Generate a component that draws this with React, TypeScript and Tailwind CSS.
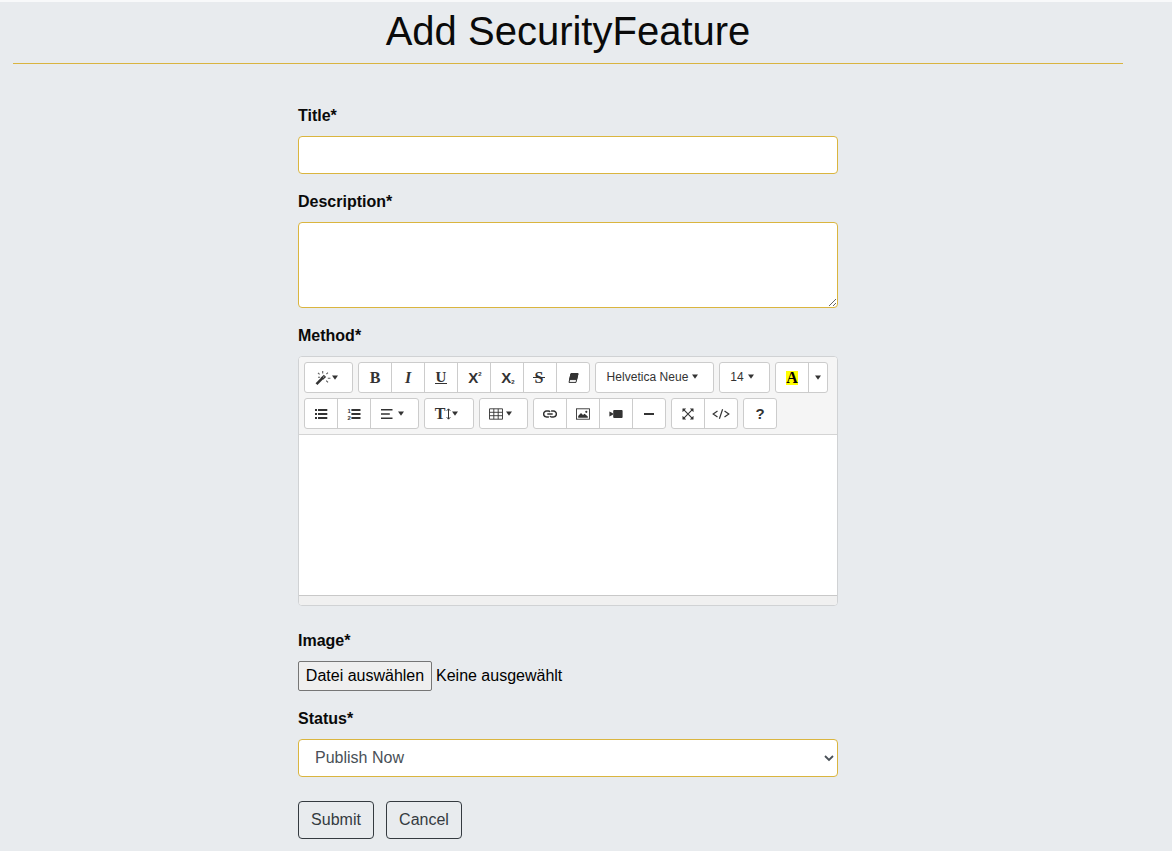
import type { ReactNode } from "react";

const HELV = "font-['Liberation_Sans',Arial,sans-serif]";
const SERIF = "font-['Liberation_Serif',serif]";

function Caret() {
  return (
    <svg width="6" height="5" viewBox="0 0 6 5" className="shrink-0" fill="currentColor">
      <path d="M0 .5H6L3 4.8Z" />
    </svg>
  );
}

function Group({ children }: { children: ReactNode }) {
  return (
    <div className="flex h-[31px] divide-x divide-[#ccc] rounded-[3px] border border-[#ccc] bg-white">
      {children}
    </div>
  );
}

function Tool({ children, label, width = "w-[33px]" }: { children: ReactNode; label: string; width?: string }) {
  return (
    <button type="button" aria-label={label} className={`flex h-full items-center justify-center text-[#333] ${width}`}>
      {children}
    </button>
  );
}

function Svg({ children, w = 14, h = 14 }: { children: ReactNode; w?: number; h?: number }) {
  return (
    <svg width={w} height={h} viewBox={`0 0 ${w} ${h}`} fill="none" stroke="currentColor" className="shrink-0">
      {children}
    </svg>
  );
}

function Toolbar() {
  return (
    <div className="flex h-[78px] flex-col gap-[5px] border-b border-[#d4d4d4] bg-[#f5f5f5] pt-[5px] pl-[5px]">
      <div className="flex gap-[5px]">
        <Group>
          <Tool label="Style" width="w-[47px] gap-px pr-[5px]">
            <Svg w={16} h={16}>
              <path d="M1.5 14.2L7.4 8.2" strokeWidth="2.6" />
              <path d="M7 8.6L10 5.8" strokeWidth="3.2" />
              <path d="M8.2 7.4L9.3 6.4" stroke="#fff" strokeWidth=".8" />
              <path d="M7.7 1V3.6M3 2.8L4.6 4.4M12.9 2.6L11.4 4.2M3 7.3H5.2M12.8 8.2H15.4M11.2 10.6L13 12.4" strokeWidth="1.1" strokeOpacity=".8" />
            </Svg>
            <Caret />
          </Tool>
        </Group>
        <Group>
          <Tool label="Bold"><span className={`${SERIF} mt-px text-[16px] font-bold`}>B</span></Tool>
          <Tool label="Italic"><span className={`${SERIF} mt-px text-[16px] font-bold italic`}>I</span></Tool>
          <Tool label="Underline">
            <span className={`${SERIF} h-[13px] w-3 border-b border-[#333] text-center text-[15px] leading-[13px] font-bold`}>U</span>
          </Tool>
          <Tool label="Superscript">
            <span className="ml-[2px] flex h-4 items-start text-[15px] leading-4 font-bold">X<span className="-mt-1 text-[6px] leading-4">2</span></span>
          </Tool>
          <Tool label="Subscript">
            <span className="ml-[2px] flex h-4 items-start text-[15px] leading-4 font-bold">X<span className="mt-1 text-[6px] leading-4">2</span></span>
          </Tool>
          <Tool label="Strikethrough">
            <span className={`${SERIF} mt-px text-[16px] font-bold`}>S</span>
            <span className="-ml-[10px] h-px w-3 bg-[#333]" />
          </Tool>
          <Tool label="Remove font style" width="w-8">
            <Svg>
              <path d="M5 2.6H12L10 11.4H3Z" strokeWidth="1" />
              <path d="M5 2.6H12L10.6 8.6H3.6Z" fill="currentColor" />
            </Svg>
          </Tool>
        </Group>
        <Group>
          <Tool label="Font family" width="w-[117px] gap-1 pr-[4px] pb-[2px]">
            <span className="text-[12px] tracking-[.03px]">Helvetica Neue</span><Caret />
          </Tool>
        </Group>
        <Group>
          <Tool label="Font size" width="w-[49px] gap-1 pr-[5px] pb-[2px]">
            <span className="text-[12px]">14</span><Caret />
          </Tool>
        </Group>
        <Group>
          <Tool label="Recent color">
            <span className={`${SERIF} flex h-[14px] w-3 items-center justify-center bg-[#ff0] text-[16px] font-bold text-black`}>A</span>
          </Tool>
          <Tool label="More color" width="w-[18px] pr-px"><Caret /></Tool>
        </Group>
      </div>
      <div className="flex gap-[5px]">
        <Group>
          <Tool label="Unordered list">
            <Svg>
              <path d="M1 3H3M1 7H3M1 11H3M4 3H13.3M4 7H13.3M4 11H13.3" strokeWidth="1.8" />
            </Svg>
          </Tool>
          <Tool label="Ordered list">
            <Svg>
              <path d="M4.4 3H13.5M4.4 7H13.5M4.4 11H13.5" strokeWidth="1.8" />
              <text x=".4" y="6" fontSize="6" fontWeight="bold" fill="currentColor" stroke="none">1</text>
              <text x=".4" y="12.8" fontSize="6" fontWeight="bold" fill="currentColor" stroke="none">2</text>
            </Svg>
          </Tool>
          <Tool label="Paragraph" width="w-[47px] gap-[5px] pr-[5px]">
            <Svg w={12} h={12}>
              <path d="M0 1.8H11.5M0 6H8.8M0 10.2H11.5" strokeWidth="1.6" />
            </Svg>
            <Caret />
          </Tool>
        </Group>
        <Group>
          <Tool label="Line height" width="w-[48px] pr-[5px]">
            <span className={`${SERIF} text-[16px] leading-4 font-bold`}>T</span>
            <Svg w={7} h={14}>
              <path d="M3.5 2V12" strokeWidth="1" />
              <path d="M1.7 3.8L3.5 1.8L5.3 3.8M1.7 10.2L3.5 12.2L5.3 10.2" strokeWidth="1" />
            </Svg>
            <Caret />
          </Tool>
        </Group>
        <Group>
          <Tool label="Table" width="w-[47px] gap-[3px] pr-[6px]">
            <Svg w={14} h={12}>
              <path d="M.5 .8H13.5V11.2H.5ZM.5 4.3H13.5M.5 7.7H13.5M4.8 .8V11.2M9.2 .8V11.2" strokeWidth=".9" />
            </Svg>
            <Caret />
          </Tool>
        </Group>
        <Group>
          <Tool label="Link">
            <Svg w={14} h={10}>
              <path d="M5.9 7.9H3.5A2.9 2.9 0 0 1 3.5 2.1H5.4Q6.5 2.1 7 3M8.1 2.1H10.5A2.9 2.9 0 0 1 10.5 7.9H8.6Q7.5 7.9 7 7M4.3 5H9.7" strokeWidth="1.5" />
            </Svg>
          </Tool>
          <Tool label="Picture">
            <Svg w={14} h={12}>
              <rect x=".5" y=".8" width="13" height="10.4" strokeWidth=".9" />
              <path d="M2.2 9.7V8L5 5.1L7 7.1L8.6 5.8L11.8 8.4V9.7Z" fill="currentColor" stroke="none" />
              <circle cx="10.3" cy="3.8" r="1.1" fill="currentColor" stroke="none" />
            </Svg>
          </Tool>
          <Tool label="Video">
            <Svg>
              <path d="M.4 4.5L3.9 6.2V7.8L.4 9.5Z" fill="currentColor" stroke="none" />
              <rect x="4.2" y="3" width="9.4" height="8" rx="1" fill="currentColor" stroke="none" />
            </Svg>
          </Tool>
          <Tool label="Horizontal rule" width="w-8"><span className="h-[2px] w-[10px] bg-[#333]" /></Tool>
        </Group>
        <Group>
          <Tool label="Full screen">
            <Svg w={12} h={12}>
              <path d="M1.2 1.2L10.8 10.8M10.8 1.2L1.2 10.8" strokeWidth="1.1" />
              <path d="M.5 .5H4.2L.5 4.2ZM11.5 .5V4.2L7.8 .5ZM11.5 11.5H7.8L11.5 7.8ZM.5 11.5V7.8L4.2 11.5Z" fill="currentColor" stroke="none" />
            </Svg>
          </Tool>
          <Tool label="Code view" width="w-8">
            <Svg w={18} h={12}>
              <path d="M5.5 3L1.2 6L5.5 9M12.5 3L16.8 6L12.5 9M10.6 1.3L7.4 10.7" strokeWidth="1.2" />
            </Svg>
          </Tool>
        </Group>
        <Group>
          <Tool label="Help" width="w-8"><span className="mt-px text-[15px] font-bold">?</span></Tool>
        </Group>
      </div>
    </div>
  );
}

function Label({ children }: { children: ReactNode }) {
  return <div className="mb-2 h-6 text-[16px] leading-6 font-bold">{children}</div>;
}

export default function App() {
  return (
    <div className={`h-[851px] w-[1172px] overflow-hidden border-t-2 border-[#f8f9fa] bg-[#e8ebee] text-[#0a0a0a] ${HELV}`}>
      <header className="ml-[13px] h-[62px] w-[1110px] border-b border-[#d9b440] pt-[5px] text-center">
        <h1 className="text-[40px] leading-[48px]">Add SecurityFeature</h1>
      </header>
      <form className="mt-10 ml-[298px] w-[540px]">
        <Label>Title*</Label>
        <input aria-label="Title" className="mb-4 block h-[38px] w-full rounded-[4px] border border-[#dab53f] bg-white" />
        <Label>Description*</Label>
        <textarea aria-label="Description" className="mb-4 block h-[86px] w-full resize-y rounded-[4px] border border-[#dab53f] bg-white" />
        <Label>Method*</Label>
        <div className="mb-[23px] flex h-[250px] flex-col overflow-hidden rounded-[4px] border border-[#d0d2d4] bg-white">
          <Toolbar />
          <div className="grow" />
          <div className="h-[10px] border-t border-[#c8c8c8] bg-[#f0f0f0]" />
        </div>
        <Label>Image*</Label>
        <div className="mb-4 flex h-[30px] items-center gap-1 text-[16px] text-black">
          <button type="button" className="h-[30px] w-[134px] rounded-[2px] border border-[#767676] bg-[#efefef] whitespace-nowrap">Datei auswählen</button>
          <span>Keine ausgewählt</span>
        </div>
        <Label>Status*</Label>
        <div className="flex h-[38px] items-center justify-between rounded-[4px] border border-[#dab53f] bg-white pr-[3px] pl-4 text-[#495057]">
          <span>Publish Now</span>
          <Svg w={10} h={8}><path d="M1 2L5 6L9 2" strokeWidth="1.8" /></Svg>
        </div>
        <div className="mt-6 flex gap-3 text-[#343a40]">
          <button type="button" className="h-[38px] w-[76px] rounded-[4px] border border-[#343a40]">Submit</button>
          <button type="button" className="h-[38px] w-[76px] rounded-[4px] border border-[#343a40]">Cancel</button>
        </div>
      </form>
    </div>
  );
}
